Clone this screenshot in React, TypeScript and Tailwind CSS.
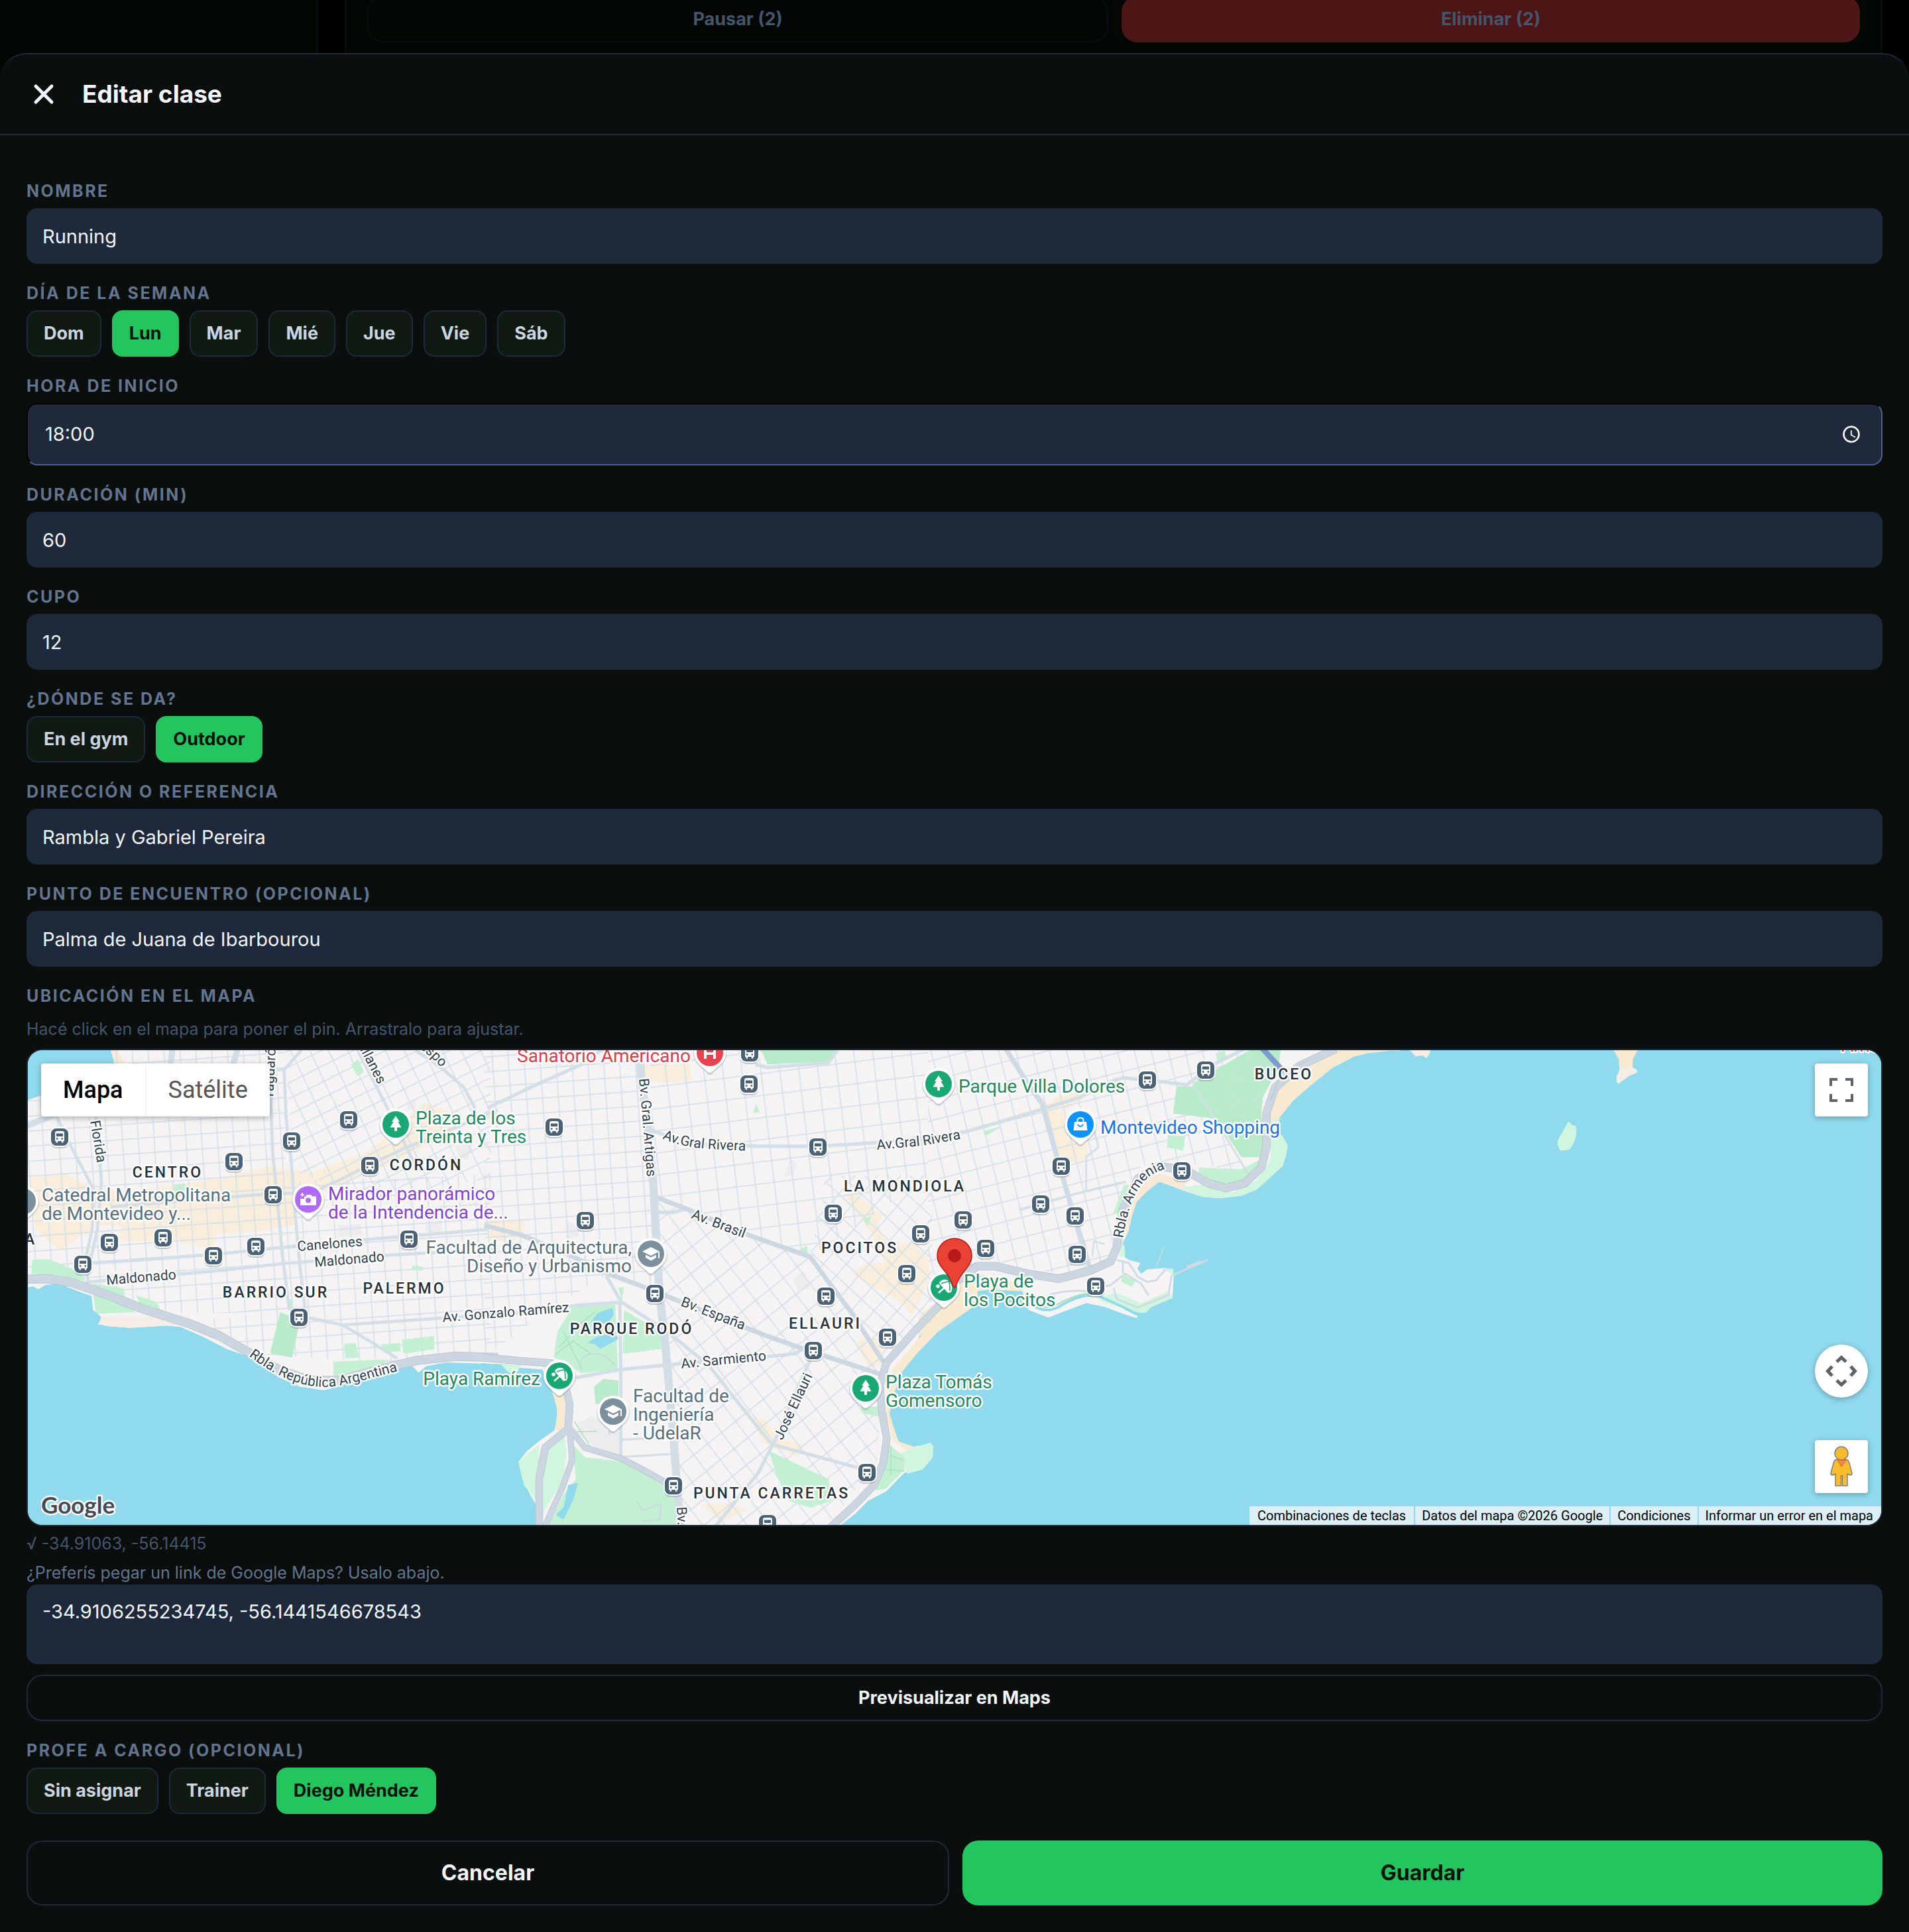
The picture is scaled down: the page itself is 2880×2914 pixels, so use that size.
import { useState, type ReactNode } from "react";
import { X } from "lucide-react";

const DAYS = ["Dom", "Lun", "Mar", "Mié", "Jue", "Vie", "Sáb"];
const PLACES = ["En el gym", "Outdoor"];
const TRAINERS = ["Sin asignar", "Trainer", "Diego Méndez"];

const LABEL = "block text-[25px] leading-[40px] mb-[6px] font-bold uppercase tracking-widest text-slate-500";
const INPUT = "block w-full h-[84px] px-6 rounded-2xl bg-[#1e293b] text-slate-100 text-[29px] outline-none";

// Each map tile is drawn in its own units and then placed on the 2796x716 canvas.
const WEST = "translate(-12 -14) scale(.4592 .4719)";
const CENTER = "translate(698 -14) scale(.4592 .4719)";
const EAST = "translate(1358 -14) scale(.4592 .4719)";
const OCEAN = "translate(2058 -14) scale(.4974 .4719)";

const BUS_STOPS = [
  [48, 131], [311, 168], [398, 137], [484, 105], [516, 174], [370, 218], [123, 290], [204, 283], [280, 310],
  [344, 296], [83, 323], [575, 285], [409, 403], [794, 116], [841, 257], [1088, 51], [1089, 4], [1192, 146],
  [1215, 246], [1347, 277], [1204, 371], [1326, 337], [1297, 433], [1185, 453], [946, 367], [974, 657],
  [1266, 637], [1116, 714], [1689, 45], [1777, 30], [1559, 175], [1741, 182], [1528, 232], [1580, 250],
  [1411, 256], [1445, 299], [1583, 308], [1611, 356],
];

type PinKind = "tree" | "beach" | "school" | "camera" | "bag" | "hospital" | "church";

const PINS: { x: number; y: number; kind: PinKind; color: string }[] = [
  { x: 555, y: 112, kind: "tree", color: "#18a874" },
  { x: 423, y: 225, kind: "camera", color: "#b06af9" },
  { x: -8, y: 228, kind: "church", color: "#7b909c" },
  { x: 1029, y: 4, kind: "hospital", color: "#ea4350" },
  { x: 940, y: 307, kind: "school", color: "#7b909c" },
  { x: 802, y: 491, kind: "beach", color: "#18a874" },
  { x: 883, y: 545, kind: "school", color: "#7b909c" },
  { x: 1374, y: 51, kind: "tree", color: "#18a874" },
  { x: 1382, y: 358, kind: "beach", color: "#18a874" },
  { x: 1264, y: 510, kind: "tree", color: "#18a874" },
  { x: 1588, y: 112, kind: "bag", color: "#0a94ff" },
];

const DISTRICTS: [string, number, number][] = [
  ["CENTRO", 211, 192],
  ["CORDÓN", 601, 181],
  ["BARRIO SUR", 374, 373],
  ["PALERMO", 568, 367],
  ["LA MONDIOLA", 1323, 213],
  ["POCITOS", 1255, 306],
  ["ELLAURI", 1203, 420],
  ["PARQUE RODÓ", 911, 428],
  ["PUNTA CARRETAS", 1122, 676],
  ["BUCEO", 1895, 44],
  ["A", 4, 293],
];

const PLACES_ON_MAP: { x: number; y: number; lines: string[]; color: string; end?: boolean }[] = [
  { x: 21, y: 228, lines: ["Catedral Metropolitana", "de Montevideo y..."], color: "#56707f" },
  { x: 453, y: 226, lines: ["Mirador panorámico", "de la Intendencia de..."], color: "#8341dc" },
  { x: 585, y: 112, lines: ["Plaza de los", "Treinta y Tres"], color: "#1d8a60" },
  { x: 911, y: 307, lines: ["Facultad de Arquitectura,", "Diseño y Urbanismo"], color: "#56707f", end: true },
  { x: 773, y: 505, lines: ["Playa Ramírez"], color: "#1d8a60", end: true },
  { x: 1000, y: 18, lines: ["Sanatorio Americano"], color: "#e23b47", end: true },
  { x: 913, y: 531, lines: ["Facultad de", "Ingeniería", "- UdelaR"], color: "#56707f" },
  { x: 1294, y: 510, lines: ["Plaza Tomás", "Gomensoro"], color: "#1d8a60" },
  { x: 1404, y: 64, lines: ["Parque Villa Dolores"], color: "#1d8a60" },
  { x: 1618, y: 126, lines: ["Montevideo Shopping"], color: "#1a73e8" },
  { x: 1412, y: 358, lines: ["Playa de", "los Pocitos"], color: "#1d8a60" },
];

const STREETS: { name: string; d: string }[] = [
  { name: "Florida", d: "M94 107L108 190" },
  { name: "Yaguarón", d: "M370 74L376 -46" },
  { name: "Magallanes", d: "M479 -44L540 74" },
  { name: "Crespo", d: "M574 -17L610 12L650 52" },
  { name: "Canelones", d: "M407 303L530 293" },
  { name: "Maldonado", d: "M433 327L560 316" },
  { name: "Maldonado", d: "M119 354L250 343" },
  { name: "Av. Gonzalo Ramírez", d: "M626 410L850 392" },
  { name: "Rbla. República Argentina", d: "M333 461C380 496 415 508 450 508C490 506 530 488 610 472" },
  { name: "Bv. Gral. Artigas", d: "M922 43L928 110L937 230" },
  { name: "Av.Gral Rivera", d: "M957 133C980 143 1000 147 1030 149L1110 153" },
  { name: "Av.Gral Rivera", d: "M1281 150L1350 144L1440 128" },
  { name: "Av. Brasil", d: "M1000 253L1110 295" },
  { name: "Bv. España", d: "M984 385L1110 434" },
  { name: "Av. Sarmiento", d: "M986 480L1140 465" },
  { name: "José Ellauri", d: "M1138 589L1192 474" },
  { name: "Bv. Gral. Artigas", d: "M979 689L988 860" },
  { name: "Rbla. Armenia", d: "M1652 284C1658 245 1668 212 1690 192C1700 184 1712 180 1740 170" },
];

function Chips({ label, options, value, onChange }: { label: string; options: string[]; value: string; onChange: (v: string) => void }) {
  return (
    <div role="group" aria-label={label}>
      <div className={LABEL}>{label}</div>
      <div className="flex flex-wrap gap-4">
        {options.map((o) => (
          <button
            key={o}
            type="button"
            aria-pressed={o === value}
            onClick={() => onChange(o)}
            className={`h-[70px] px-6 rounded-2xl border-2 text-[27px] font-bold ${
              o === value ? "bg-[#22c55e] border-[#22c55e] text-[#07120b]" : "bg-[#101a13] border-[#1e293b] text-slate-300"
            }`}
          >
            {o}
          </button>
        ))}
      </div>
    </div>
  );
}

function Field({ id, label, children }: { id: string; label: string; children: ReactNode }) {
  return (
    <div>
      <label htmlFor={id} className={LABEL}>{label}</label>
      {children}
    </div>
  );
}

function BusStop({ x, y }: { x: number; y: number }) {
  return (
    <g transform={`translate(${x} ${y})`}>
      <rect x="-14" y="-13" width="28" height="30" rx="9" fill="#6b7280" opacity=".35" />
      <rect x="-15" y="-15" width="30" height="30" rx="10" fill="#fff" />
      <rect x="-13" y="-13" width="26" height="26" rx="8" fill="#4a6277" />
      <path d="M-7 -6Q-7 -9 -4 -9H4Q7 -9 7 -6V6H5.500V8.500H2.800V6H-2.800V8.500H-5.500V6H-7Z" fill="#fff" />
      <path d="M-5 -5.500H5V-1H-5Z" fill="#4a6277" />
      <circle cx="-3.800" cy="2.600" r="1.400" fill="#4a6277" />
      <circle cx="3.800" cy="2.600" r="1.400" fill="#4a6277" />
    </g>
  );
}

function PinGlyph({ kind }: { kind: PinKind }) {
  switch (kind) {
    case "tree":
      return <path d="M0 -13L6 -4H3.500L8.500 4.500H2V10H-2V4.500H-8.500L-3.500 -4H-6Z" fill="#fff" />;
    case "beach":
      return (
        <g>
          <path d="M-7 -8Q1 -16 8 -9Q15 -2 11 7L6 8L-6 -5Z" fill="#fff" />
          <path d="M-4 -6Q3 -9 8 -9Q9 -2 9 5" fill="none" stroke="#18a874" strokeWidth="1.600" />
          <path d="M2 -1L-8 8" stroke="#fff" strokeWidth="2.600" />
          <circle cx="-9" cy="-2" r="2.800" fill="#fff" />
        </g>
      );
    case "school":
      return (
        <g fill="#fff">
          <path d="M0 -10L13 -3.500L0 3L-13 -3.500Z" />
          <path d="M-8 1.500L0 5.500L8 1.500V6L0 10.500L-8 6Z" />
          <path d="M11 -3H13V7H11Z" />
        </g>
      );
    case "camera":
      return (
        <g>
          <path d="M-3 -7H4L6 -4.500H12V9H-12V-1H-6V-4.500H-3Z" fill="#fff" />
          <circle cx="0" cy="1.500" r="4" fill="#b06af9" />
          <path d="M-9 -10V-4M-12 -7H-6" stroke="#fff" strokeWidth="1.600" />
        </g>
      );
    case "bag":
      return (
        <g>
          <path d="M-9 -4H9L10.500 9H-10.500Z" fill="#fff" />
          <path d="M-4.500 -4V-6Q-4.500 -10 0 -10Q4.500 -10 4.500 -6V-4" fill="none" stroke="#fff" strokeWidth="2" />
          <path d="M-4 0Q0 6 4 0" fill="none" stroke="#0a94ff" strokeWidth="2" />
        </g>
      );
    case "hospital":
      return <path d="M-7 -8V9M7 -8V9M-7 1H7" stroke="#fff" strokeWidth="4" />;
    default:
      return <path d="M0 -10V10M-6 -4H6" stroke="#fff" strokeWidth="3" />;
  }
}

function WestTile() {
  return (
    <g transform={WEST}>
      <g fill="#f8eedb">
        <path d="M30 440L140 420L240 470L240 600L130 670L50 600Z" />
        <path d="M250 470L380 480L640 440L820 400L960 420L1150 350L1330 195L1440 240L1420 300L1200 400L1000 480L900 510V590L780 610L640 620V665L500 640H320L330 590H260Z" />
      </g>
      <path d="M295 20L312 75H345L318 20Z" fill="#f7ecd9" />
      <g fill="#ececee">
        <path d="M1045 590L1120 585L1125 620L1048 625Z" />
        <path d="M1330 580L1385 575V610L1335 612Z" />
        <path d="M1270 195L1300 185V215L1275 218Z" />
        <path d="M1430 335L1490 330L1470 380L1440 370Z" />
      </g>
      <path d="M26 0H870V870H300L220 770L26 740Z" fill="url(#grid-a)" />
      <path d="M870 0H1546V440L1180 500L900 420Z" fill="url(#grid-b)" />
      <path d="M870 450L1546 430V1000L1240 1030L760 1000L560 900L870 860Z" fill="url(#grid-a)" />
      <g fill="#c3f0d3">
        <path d="M40 700L95 697L200 740L215 768L120 750L38 745Z" />
        <path d="M238 775L340 790L345 820L245 800Z" />
        <path d="M240 805L385 850L370 868L250 872Z" />
        <path d="M380 812L450 835L470 875L400 850Z" />
        <path d="M470 885L520 905L480 908Z" />
        <path d="M1255 955L1360 943L1362 985L1260 1000Z" />
        <path d="M1185 970L1250 965V992L1200 996Z" />
        <path d="M1065 968L1103 965L1115 1012L1070 1014Z" />
        <path d="M1030 1025L1210 1018L1160 1060L1030 1070Z" />
        <path d="M1088 75L1112 60L1130 100L1108 112Z" />
        <path d="M505 460L540 455L560 475L510 482Z" />
        <path d="M1290 718L1325 722V733H1286Z" />
        <path d="M855 868L920 890L895 1012L822 998Z" fill="#b7ebc9" />
        <path d="M883 825H895L897 860H885Z" />
      </g>
      <path d="M0 20H295L312 75L250 130L75 172L0 198Z" fill="#90daee" />
      <path
        d="M0 792L45 785L60 794L85 780L130 776L190 800L235 815L240 860L265 880L270 895L255 905L290 912L360 917L480 910L530 915L600 945L680 985L750 1008L800 1040L850 1075L920 1105L1000 1117L1060 1100L1150 1075L1220 1050L1290 1040L1310 1060L1335 1040L1400 1028L1570 1033V1570H0Z"
        fill="#90daee"
      />
      <path d="M270 880L480 880L530 912L480 910L360 917L290 912L258 905Z" fill="#f6eee6" />
      <g fill="none" stroke="#d3dee7" strokeWidth="10" strokeLinejoin="round">
        <path d="M215 712L470 695L640 682L860 660L1135 635L1570 600" />
        <path d="M215 772L285 765L530 745L700 730L860 712L1210 685L1570 665" />
        <path d="M300 530L620 505L800 490L960 485L1060 440L1150 395L1260 345L1400 290L1570 220" />
        <path d="M818 20L830 350L845 500L862 680L885 860" />
        <path d="M868 95L875 250L893 400L905 560L920 720L937 860" />
        <path d="M820 92H868L925 30" />
        <path d="M120 240L185 370L240 470L238 600L215 700L225 770" />
        <path d="M250 240L268 450L255 600L232 700" />
        <path d="M1110 30L1200 200L1260 320L1300 400" />
        <path d="M1300 30L1390 90L1460 150L1495 215" />
        <path d="M950 885L1060 908L1150 960L1240 1015" />
        <path d="M1060 908L1400 885L1570 875" />
      </g>
      <g fill="none" stroke="#d3dee7" strokeWidth="20">
        <path d="M0 280L90 245L160 215" />
        <path d="M502 20L495 75M718 20L700 75" />
      </g>
      <path d="M0 762L90 760L170 772L270 805L400 855L560 905L650 940L760 1000L850 1050L950 1085L1050 1085L1180 1050L1300 1022L1430 1008L1570 1012" fill="none" stroke="#b4bfca" strokeWidth="29" />
      <path d="M0 762L90 760L170 772L270 805L400 855L560 905L650 940L760 1000L850 1050L950 1085L1050 1085L1180 1050L1300 1022L1430 1008L1570 1012" fill="none" stroke="#ccd6e0" strokeWidth="26" />
    </g>
  );
}

function CenterTile() {
  return (
    <g transform={CENTER}>
      <g fill="#f8eedb">
        <path d="M505 75H657L655 128L500 132Z" />
        <path d="M1160 490H1200L1290 560L1270 590L1300 640L1390 650L1440 700V760L1385 880L1340 830L1210 760L1190 740L1240 710H1300L1240 600Z" />
        <path d="M850 1200L900 1210L950 1270L1020 1290L1010 1330L900 1290Z" />
        <path d="M690 1480H800L840 1500L760 1540Z" />
        <path d="M1200 960L1270 950L1300 1030L1240 1045Z" />
        <path d="M-20 570L110 572V625L0 645Z" />
      </g>
      <g fill="#ececee">
        <path d="M985 375L1005 395L995 430L965 435Z" />
        <path d="M995 760L1030 735L1050 790L1010 800Z" />
        <path d="M245 580L290 585V625L250 630Z" />
        <path d="M280 1225L330 1200L425 1220V1320L380 1325L290 1260Z" />
      </g>
      <path d="M-20 20H490L530 460L550 800L400 740L200 850L0 1000H-20Z" fill="url(#grid-a)" />
      <path d="M520 20H1437V440L1050 690L545 500Z" fill="url(#grid-c)" />
      <path d="M545 510L1050 690L1290 1030L1270 1340L1100 1560H625L575 980Z" fill="url(#grid-d)" />
      <path d="M1050 690L1100 430H1450V900L1300 1030Z" fill="url(#grid-e)" />
      <g fill="#c3f0d3">
        <path d="M270 850L410 843L418 1050L300 1062L208 1010L220 930Z" />
        <path d="M438 860L560 930V985L435 1000Z" />
        <path d="M270 1290L310 1330L430 1345L600 1430L615 1570H180L240 1450L280 1400Z" />
        <path d="M340 1105L370 1080L420 1085V1165L345 1160Z" fill="#b7ebc9" />
        <path d="M915 1310L1110 1400L1120 1470L1050 1492L980 1470L940 1390Z" />
        <path d="M885 20H1140L1110 65L910 75Z" fill="#b7ebc9" />
        <path d="M863 230L873 198L883 228Z" />
        <path d="M1008 672L1040 655L1045 692Z" />
        <path d="M1222 568L1250 560L1240 592Z" />
        <path d="M420 788H438L432 830Z" />
        <path d="M1215 1165L1275 1170V1200L1220 1190Z" />
      </g>
      <path
        d="M-30 1030L60 1035L100 1045L170 1050L190 1090L215 1150L220 1200L210 1245L165 1275L120 1310L92 1345L105 1400L130 1450L155 1490L150 1570H-30Z"
        fill="#90daee"
      />
      <path
        d="M1640 800L1568 850L1500 890L1440 950L1380 1010L1340 1070L1325 1130L1310 1190L1325 1240L1340 1280L1380 1300L1420 1290L1450 1290L1453 1330L1420 1370L1360 1380L1330 1410L1300 1440L1240 1470L1200 1510L1150 1548L1140 1570H1640Z"
        fill="#90daee"
      />
      <path d="M170 1040L200 1040L245 1100V1240L212 1248L220 1180L200 1110Z" fill="#f8ead0" />
      <path d="M1600 790L1520 840L1460 890L1390 970L1320 1050L1305 1120L1300 1200L1325 1280L1380 1318L1400 1300L1340 1280L1310 1190L1325 1130L1350 1060L1400 1000L1470 930L1600 840Z" fill="#f8ead0" />
      <g fill="#d1f6df">
        <path d="M242 1262L180 1310L165 1400L170 1510L235 1410L250 1320Z" />
        <path d="M92 1345L160 1290V1480L110 1420Z" />
        <path d="M1345 1320L1390 1300L1445 1284L1455 1295L1453 1330L1420 1370L1370 1383Z" />
        <path d="M30 1030L100 1035L90 1055L60 1060Z" />
      </g>
      <path d="M1310 1290L1360 1330V1370L1300 1430L1265 1438L1300 1350Z" fill="#c3f0d3" />
      <g fill="#90daee">
        <path d="M352 870L400 853L405 875L385 905L330 898Z" />
        <path d="M318 965L350 945L410 932L420 952L360 985L345 970Z" />
        <path d="M255 1420L288 1412L270 1470L240 1530L215 1515L240 1490Z" />
      </g>
      <g fill="none" stroke="#9fe0b8" strokeWidth="2.500">
        <path d="M275 1215L330 1300L415 1325M270 1250L350 1248" />
        <path d="M225 980L300 900L345 865M240 930L300 1050M215 1000L270 960L330 1000" />
        <path d="M1315 1325L1355 1340M1300 1370L1360 1375M1315 1295V1390" />
      </g>
      <path d="M295 1050Q290 1000 340 1000Q380 1000 410 1040M390 1260V1240H425M480 1470L500 1500L560 1480L555 1530L495 1535" fill="none" stroke="#cbd6e0" strokeWidth="4" />
      <g fill="none" stroke="#d3dee7" strokeWidth="11" strokeLinejoin="round">
        <path d="M-10 215L150 140L300 75L370 25" />
        <path d="M870 75L910 85L1110 70L1140 30" />
        <path d="M530 285L570 300L700 330L870 336L1075 337L1270 325L1437 308" />
        <path d="M640 538L600 548H548" />
        <path d="M380 750L430 835L520 890L620 960L720 1040L800 1140L920 1285" />
        <path d="M-20 885L285 845L430 835M425 840L428 1060V1330" />
        <path d="M260 1080L430 1050L620 1032L920 1008L1000 1000L1025 985" />
        <path d="M1050 1020L1000 1130L940 1265L880 1380L790 1490L740 1550" />
        <path d="M920 1288L1060 1325L1210 1365" />
        <path d="M430 1275L600 1265M430 1330L600 1320" strokeWidth="7" />
      </g>
      <g fill="none" stroke="#ccd7e1" strokeWidth="15" strokeLinejoin="round">
        <path d="M545 500L640 535L860 625L1050 690L1110 770L1180 860L1240 950L1290 1025" />
        <path d="M-20 590L100 620L250 680L390 745L540 800L640 840L900 940L1030 985L1280 1065" />
      </g>
      <path d="M490 20L495 120L520 300L535 460L545 640L555 800L575 980L600 1250L615 1450L625 1570" fill="none" stroke="#d3dde6" strokeWidth="27" />
      <g fill="none" strokeLinejoin="round">
        <g stroke="#b4bfca" strokeWidth="25">
          <path d="M-20 1012L90 1022L200 1030L240 1080L260 1160L255 1240L180 1300L160 1400L160 1570" />
          <path d="M260 1240L268 1340L235 1430L170 1570M262 1240L310 1300L430 1335L500 1370L610 1430" strokeWidth="20" />
          <path d="M1100 1570L1200 1480L1260 1420L1290 1350L1302 1270L1285 1180L1280 1100L1300 1030L1400 920L1480 840L1530 770L1600 720" />
        </g>
        <g stroke="#ccd6e0" strokeWidth="22">
          <path d="M-20 1012L90 1022L200 1030L240 1080L260 1160L255 1240L180 1300L160 1400L160 1570" />
          <path d="M260 1240L268 1340L235 1430L170 1570M262 1240L310 1300L430 1335L500 1370L610 1430" strokeWidth="17" />
          <path d="M1100 1570L1200 1480L1260 1420L1290 1350L1302 1270L1285 1180L1280 1100L1300 1030L1400 920L1480 840L1530 770L1600 720" />
        </g>
      </g>
    </g>
  );
}

function EastTile() {
  return (
    <g transform={EAST}>
      <path d="M385 205L420 180L520 155V180L440 225L520 320L525 360L510 390L455 385L440 400L415 310Z" fill="#f8eedb" />
      <path d="M0 20H1080L870 135L940 245L1050 420L800 380L700 400L620 560L600 700L440 745L163 700L0 760Z" fill="url(#grid-f)" />
      <g fill="#c3f0d3">
        <path d="M870 135L1070 22H1160L1150 90L1100 180L1095 230L1110 340L1090 372H1030L940 240Z" fill="#b7ebc9" />
        <path d="M817 145H872L938 248L805 232Z" fill="#b7ebc9" />
        <path d="M790 300L845 305L838 350L785 340Z" />
        <path d="M890 405L1030 410L1110 370L1095 410L1040 445L960 457L890 435Z" />
        <path d="M645 460H662L628 552H608Z" />
        <path d="M455 742L520 720L515 747Z" />
        <path d="M185 288L245 272L190 303Z" />
        <path d="M945 40L975 30L980 55L950 65Z" />
      </g>
      <g fill="none" stroke="#cfe3dc" strokeWidth="3">
        <path d="M920 190L1110 60M930 220L1105 180M960 110L1030 250L1070 350M1000 90L1090 220M1050 60L1085 130M970 260L1090 300" strokeDasharray="12 3" />
      </g>
      <path
        d="M-30 945L0 920L90 835L150 800L200 793L310 800L330 860L395 884L440 867L520 838L580 850L640 872L685 886L690 880L640 856L700 868H715L735 850L803 822L808 745L780 725L720 730L700 745L688 728L698 710L660 700L645 690L638 650L658 610L670 560L685 515L720 480L760 450L830 475L900 498L960 503L1030 495L1080 475L1120 440L1165 400L1175 370L1182 335L1165 305L1150 290L1155 245L1200 190L1260 140L1330 85L1400 50L1450 38L1530 30V20H1640V1570H-30Z"
        fill="#90daee"
      />
      <path d="M-30 945L0 920L90 838L150 802L200 795L310 800L300 775L170 745L110 770L-30 880Z" fill="#f8ead0" />
      <path d="M638 680L632 640L665 520L720 440L760 425L850 450L840 476L760 450L720 480L685 515L670 560L658 610L638 650Z" fill="#f7e9d3" />
      <path d="M1120 260L1135 180L1170 130L1240 85L1350 30H1530L1450 38L1400 50L1330 85L1260 140L1200 190L1155 245L1145 290Z" fill="#f8ead0" />
      <g fill="#d1f6df">
        <path d="M830 470L900 460L1000 485L1080 445L1125 380L1128 260L1150 240L1150 290L1165 305L1182 335L1165 400L1120 440L1080 475L1030 495L960 503L900 498Z" />
        <path d="M550 820L620 805L700 838L790 800L805 820L735 850L715 868L690 868L640 855L580 835Z" />
        <path d="M770 728L805 728L808 748Z" />
        <path d="M630 655L645 650L648 690L630 690Z" />
      </g>
      <path d="M640 745L682 768L670 786L634 770Z" fill="#c3f0d3" />
      <path d="M320 820Q370 880 430 850Q500 805 560 815L640 850L690 875" fill="none" stroke="#90daee" strokeWidth="8" />
      <path d="M320 810Q370 870 425 842Q500 800 560 808" fill="none" stroke="#9fe0b8" strokeWidth="4" />
      <g fill="none" stroke="#d0dae4" strokeWidth="6">
        <path d="M610 790L620 825L690 852L790 812L800 750L920 700" />
        <path d="M620 700L660 710L690 755L720 770L750 765L780 730" />
        <path d="M640 705L640 740L700 775L725 815M400 810Q470 795 520 800L600 780L640 750" />
        <path d="M750 725L774 658" strokeWidth="3" />
      </g>
      <path d="M850 722L895 708M880 712L900 705" stroke="#d0dae4" strokeWidth="8" />
      <g fill="none" stroke="#d3dee7" strokeWidth="11" strokeLinejoin="round">
        <path d="M-10 308L125 290L250 255L370 220L500 180L600 130L640 118L720 125L850 140L940 75L1040 25" />
        <path d="M870 140L940 245L1055 430" strokeWidth="6" />
        <path d="M520 480V370L560 340L545 280" strokeWidth="6" />
        <path d="M300 540L480 490L650 450" strokeWidth="8" />
        <path d="M540 690L545 640L580 650" strokeWidth="5" />
      </g>
      <path d="M252 20L330 140L375 200L400 290L435 410L480 560L510 650L535 740" fill="none" stroke="#d0dae4" strokeWidth="16" />
      <path d="M1095 20L1170 100" fill="none" stroke="#7d9bd0" strokeWidth="18" />
      <g fill="none" strokeLinejoin="round">
        <path d="M50 800L110 740L163 720L220 720L330 745L430 760L530 735L600 705L620 660L640 540L690 440L760 400L850 415L920 455L980 470L1040 455L1095 405L1112 340V230L1140 150L1220 80L1340 25" stroke="#b4bfca" strokeWidth="27" />
        <path d="M50 800L110 740L163 720L220 720L330 745L430 760L530 735L600 705L620 660L640 540L690 440L760 400L850 415L920 455L980 470L1040 455L1095 405L1112 340V230L1140 150L1220 80L1340 25" stroke="#ccd6e0" strokeWidth="24" />
        <path d="M1125 190L1160 110L1250 60" stroke="#b4bfca" strokeWidth="2" />
      </g>
    </g>
  );
}

function MapCanvas() {
  return (
    <svg className="block w-full h-full font-[Roboto,sans-serif]" viewBox="0 0 2796 716" preserveAspectRatio="xMidYMid slice" role="img" aria-label="Mapa de Montevideo">
      <defs>
        <pattern id="grid-a" width="52" height="48" patternUnits="userSpaceOnUse" patternTransform="rotate(-4)">
          <path d="M0 2H52M2 0V48" stroke="#d6e0e8" strokeWidth="3.500" />
        </pattern>
        <pattern id="grid-b" width="56" height="46" patternUnits="userSpaceOnUse" patternTransform="rotate(-26)">
          <path d="M0 2H56M2 0V46" stroke="#d6e0e8" strokeWidth="3.500" />
        </pattern>
        <pattern id="grid-c" width="62" height="70" patternUnits="userSpaceOnUse" patternTransform="rotate(-7)">
          <path d="M0 2H62M2 0V70" stroke="#d6e0e8" strokeWidth="3.500" />
        </pattern>
        <pattern id="grid-d" width="58" height="66" patternUnits="userSpaceOnUse" patternTransform="rotate(-38)">
          <path d="M0 2H58M2 0V66" stroke="#d6e0e8" strokeWidth="3.500" />
        </pattern>
        <pattern id="grid-e" width="50" height="56" patternUnits="userSpaceOnUse" patternTransform="rotate(-48)">
          <path d="M0 2H50M2 0V56" stroke="#d6e0e8" strokeWidth="3.500" />
        </pattern>
        <pattern id="grid-f" width="54" height="62" patternUnits="userSpaceOnUse" patternTransform="rotate(-14)">
          <path d="M0 2H54M2 0V62" stroke="#d6e0e8" strokeWidth="3.500" />
        </pattern>
        {STREETS.map((s, i) => (
          <path key={i} id={`street-${i}`} d={s.d} />
        ))}
      </defs>

      <rect width="2796" height="716" fill="#f5f3f4" />
      <rect x="2050" width="746" height="716" fill="#90daee" />
      <WestTile />
      <EastTile />
      <CenterTile />
      <g transform={OCEAN}>
        <path d="M-30 20H25V32L-30 30ZM45 20H120L115 38L105 55L92 46L72 50Z" fill="#f6eee6" />
        <path d="M668 20H750L730 60V85L690 90L688 60Z" fill="#f8ead0" />
        <path d="M692 88L728 83L742 92L745 100L720 112L686 137L681 130V115Z" fill="#f6eee6" />
        <path d="M535 257L545 268L557 272Q562 295 555 315Q548 340 535 348L510 351Q500 330 503 318L520 285Z" fill="#d1f6df" />
      </g>

      <g fontSize="21" fill="#2c3e50" stroke="#fff" strokeWidth="5" strokeLinejoin="round" paintOrder="stroke">
        {STREETS.map((s, i) => (
          <text key={i}>
            <textPath href={`#street-${i}`}>{s.name}</textPath>
          </text>
        ))}
      </g>
      {BUS_STOPS.map(([x, y]) => (
        <BusStop key={`${x}-${y}`} x={x} y={y} />
      ))}
      <g className="tracking-[3px]" fontSize="23" fontWeight="500" fill="#25303b" stroke="#fff" strokeWidth="5" strokeLinejoin="round" paintOrder="stroke" textAnchor="middle">
        {DISTRICTS.map(([name, x, y]) => (
          <text key={name} x={x} y={y}>{name}</text>
        ))}
      </g>
      {PINS.map((p) => (
        <g key={`${p.x}-${p.y}`} transform={`translate(${p.x} ${p.y})`}>
          <path d="M0 33C-3 33 -5 30 -8 27C-14 22 -25 14 -25 2A25 25 0 0 1 25 2C25 14 14 22 8 27C5 30 3 33 0 33Z" fill="#64748b" opacity=".3" />
          <path d="M0 30C-3 30 -5 27 -8 24.500C-14 19 -24 13 -24 0A24 24 0 0 1 24 0C24 13 14 19 8 24.500C5 27 3 30 0 30Z" fill="#fff" />
          <circle r="20" fill={p.color} />
          <PinGlyph kind={p.kind} />
        </g>
      ))}
      <g fontSize="28" stroke="#fff" strokeWidth="5" strokeLinejoin="round" paintOrder="stroke">
        {PLACES_ON_MAP.map((p) => (
          <text key={p.lines[0] + p.x} fill={p.color} textAnchor={p.end ? "end" : "start"}>
            {p.lines.map((line, i) => (
              <tspan key={line} x={p.x} y={p.y + i * 28}>{line}</tspan>
            ))}
          </text>
        ))}
        <text x="2736" y="2" fill="#e23b47">Amarras</text>
      </g>

      <path
        d="M1372 310A26 26 0 0 1 1424 310C1424 320 1418 327 1412 334C1405 343 1402 350 1400 356Q1398 359 1396 356C1394 350 1391 343 1384 334C1378 327 1372 320 1372 310Z"
        fill="#ea4335"
        stroke="#b8191b"
        strokeWidth="1.500"
      />
      <circle cx="1398" cy="310" r="10" fill="#b8191b" />
    </svg>
  );
}

const MAP_BUTTON = "grid place-items-center size-20 bg-white shadow-[0_2px_8px_rgba(0,0,0,0.3)]";

function MapPicker() {
  const [view, setView] = useState("Mapa");
  return (
    <div className="relative h-[720px] border-2 border-[#1e293b] rounded-3xl overflow-hidden font-[Roboto,sans-serif]">
      <MapCanvas />
      <div className="absolute top-5 left-5 flex h-20 rounded-sm bg-white text-[36px] shadow-[0_2px_8px_rgba(0,0,0,0.3)]">
        {["Mapa", "Satélite"].map((v) => (
          <button
            key={v}
            type="button"
            onClick={() => setView(v)}
            className={`px-[33px] first:border-r-2 border-gray-100 ${v === view ? "font-medium text-black" : "text-[#565656]"}`}
          >
            {v}
          </button>
        ))}
      </div>

      <div className="absolute top-5 bottom-12 right-5 flex flex-col">
        <button type="button" aria-label="Pantalla completa" className={`${MAP_BUTTON} rounded-sm`}>
          <svg width="36" height="36" viewBox="0 0 36 36" fill="none" stroke="#5f6368" strokeWidth="4">
            <path d="M2 12V2H12M24 2H34V12M34 24V34H24M12 34H2V24" />
          </svg>
        </button>
        <button type="button" aria-label="Controles de la cámara" className={`${MAP_BUTTON} mt-auto rounded-full`}>
          <svg width="48" height="48" viewBox="0 0 48 48" fill="none" stroke="#5f6368" strokeWidth="5">
            <path d="M17 10L24 3.500L31 10M17 38L24 44.500L31 38M10 17L3.500 24L10 31M38 17L44.500 24L38 31" />
          </svg>
        </button>
        <button type="button" aria-label="Street View" className={`${MAP_BUTTON} mt-16 rounded-sm`}>
          <svg width="36" height="62" viewBox="0 0 36 62" fill="#fbbc2b" stroke="#7a7f87" strokeWidth="1.500">
            <path d="M9 21Q18 18 27 21Q29 22 30 26L34 41Q34 44 31 44L27 42V60H19.500V45H17.500V60H9V42L5 44Q2 44 2 41L6 26Q7 22 9 21Z" />
            <path d="M12 21H25L18 31Z" fill="#f28a3c" stroke="#e2574c" strokeWidth="1" />
            <circle cx="18" cy="11" r="10" />
          </svg>
        </button>
      </div>

      <a href="#google" className="absolute bottom-1 left-5">
        <svg width="124" height="48" viewBox="0 0 124 48" aria-label="Google">
          <text x="0" y="35" fontSize="35" fontWeight="700" fill="#434a56" stroke="#fff" strokeWidth="5" strokeLinejoin="round" paintOrder="stroke" className="font-[Lato,sans-serif]">Google</text>
        </svg>
      </a>
      <div className="absolute bottom-0 right-0 flex gap-[2px] text-[20px] leading-7 text-black">
        <button type="button" className="px-3 bg-neutral-100/75">Combinaciones de teclas</button>
        <span className="px-[10px] bg-neutral-100/75">Datos del mapa ©2026 Google</span>
        <a href="#condiciones" className="px-[10px] bg-neutral-100/75">Condiciones</a>
        <a href="#informar" className="pl-[10px] pr-3 bg-neutral-100/75">Informar un error en el mapa</a>
      </div>
    </div>
  );
}

export default function App() {
  const [name, setName] = useState("Running");
  const [day, setDay] = useState("Lun");
  const [time, setTime] = useState("18:00");
  const [duration, setDuration] = useState("60");
  const [capacity, setCapacity] = useState("12");
  const [place, setPlace] = useState("Outdoor");
  const [address, setAddress] = useState("Rambla y Gabriel Pereira");
  const [meeting, setMeeting] = useState("Palma de Juana de Ibarbourou");
  const [link, setLink] = useState("-34.9106255234745, -56.1441546678543");
  const [trainer, setTrainer] = useState("Diego Méndez");

  return (
    <div className="grid min-h-screen bg-black font-[Inter,sans-serif]">
      {/* dimmed page behind the sheet */}
      <div className="col-start-1 row-start-1 flex h-32 overflow-hidden items-start">
        <div className="w-[480px] h-full shrink-0 bg-[#020703] border-r-2 border-[#0a0d10]" />
        <div className="flex-1 px-10">
          <div className="flex gap-5 -mt-10 px-8 pt-8 pb-8 rounded-3xl border-2 border-[#0a0d10] bg-[#020703] text-[27px] font-bold text-slate-600">
            <button type="button" className="flex-1 h-[70px] rounded-3xl border-2 border-[#0a0e12]">Pausar (2)</button>
            <button type="button" className="flex-1 h-[70px] rounded-3xl bg-[#4d1616]">Eliminar (2)</button>
          </div>
        </div>
      </div>

      <div role="dialog" aria-labelledby="sheet-title" className="col-start-1 row-start-1 mt-20 rounded-t-[40px] border-t-2 border-[#1e293b] bg-[#0a0e0d]">
        <div className="flex items-center gap-8 h-[122px] px-10 border-b-2 border-[#1e293b] text-slate-100">
          <button type="button" aria-label="Cerrar" className="grid place-items-center w-[52px] h-[52px]">
            <X className="size-12" strokeWidth={2.5} />
          </button>
          <h2 id="sheet-title" className="text-[37px] font-bold">Editar clase</h2>
        </div>

        <form className="flex flex-col gap-6 px-10 pt-16 pb-10" onSubmit={(e) => e.preventDefault()}>
          <Field id="name" label="Nombre">
            <input id="name" className={INPUT} value={name} onChange={(e) => setName(e.target.value)} />
          </Field>
          <Chips label="Día de la semana" options={DAYS} value={day} onChange={setDay} />
          <Field id="time" label="Hora de inicio">
            <div className="flex items-center h-[94px] pl-[26px] pr-8 rounded-2xl border-2 border-t-black border-l-black border-r-[#4b6490] border-b-[#4b6490] bg-[#1e293b]">
              <input id="time" className="flex-1 bg-transparent text-slate-100 text-[29px] outline-none" value={time} onChange={(e) => setTime(e.target.value)} />
              <svg width="26" height="26" viewBox="0 0 26 26" fill="none" stroke="#fff">
                <circle cx="13" cy="13" r="11.500" strokeWidth="2.600" />
                <path d="M12.800 7V14L19 17.500" strokeWidth="1.800" />
              </svg>
            </div>
          </Field>
          <Field id="duration" label="Duración (min)">
            <input id="duration" className={INPUT} value={duration} onChange={(e) => setDuration(e.target.value)} />
          </Field>
          <Field id="capacity" label="Cupo">
            <input id="capacity" className={INPUT} value={capacity} onChange={(e) => setCapacity(e.target.value)} />
          </Field>
          <Chips label="¿Dónde se da?" options={PLACES} value={place} onChange={setPlace} />
          <Field id="address" label="Dirección o referencia">
            <input id="address" className={INPUT} value={address} onChange={(e) => setAddress(e.target.value)} />
          </Field>
          <Field id="meeting" label="Punto de encuentro (opcional)">
            <input id="meeting" className={INPUT} value={meeting} onChange={(e) => setMeeting(e.target.value)} />
          </Field>

          <div>
            <div className={LABEL}>Ubicación en el mapa</div>
            <p className="mb-[6px] text-[25px] leading-[48px] text-slate-600">Hacé click en el mapa para poner el pin. Arrastralo para ajustar.</p>
            <MapPicker />
            <p className="mt-2 text-[25px] leading-9 text-slate-600">√ -34.91063, -56.14415</p>
            <label htmlFor="link" className="block mt-2 text-[25px] leading-9 text-slate-500">
              ¿Preferís pegar un link de Google Maps? Usalo abajo.
            </label>
            <textarea
              id="link"
              className="block w-full h-[120px] px-6 py-5 rounded-2xl bg-[#1e293b] text-slate-100 text-[29px] leading-[42px] resize-none outline-none"
              value={link}
              onChange={(e) => setLink(e.target.value)}
            />
            <button type="button" className="block w-full h-[70px] mt-4 rounded-3xl border-2 border-[#1e293b] text-[27px] font-bold text-slate-100">
              Previsualizar en Maps
            </button>
          </div>

          <Chips label="Profe a cargo (opcional)" options={TRAINERS} value={trainer} onChange={setTrainer} />

          <div className="flex gap-5 mt-4 text-[32px] font-bold">
            <button type="button" className="flex-1 h-[98px] rounded-3xl border-2 border-[#1e293b] text-slate-100">Cancelar</button>
            <button type="submit" className="flex-1 h-[98px] rounded-3xl bg-[#22c55e] text-[#07120b]">Guardar</button>
          </div>
        </form>
      </div>
    </div>
  );
}
